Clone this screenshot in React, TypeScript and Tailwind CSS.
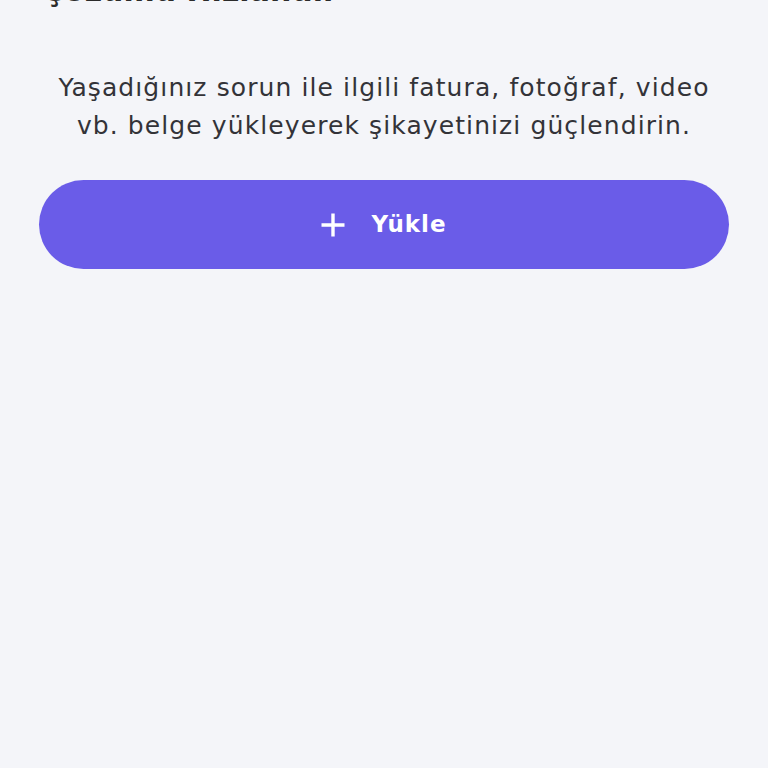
export default function App() {
  return (
    <div className="min-h-[768px] w-full overflow-hidden bg-[#f4f5f9] font-['DejaVu_Sans',sans-serif]">
      <div className="px-[39px]">
        <h2 className="mt-[-27px] pl-[3px] text-[30px] font-bold leading-[36px] text-[#2b2b2b]">
          Çözümü Hızlandır
        </h2>
        <p className="mt-[60px] text-center text-[25px] leading-[38px] tracking-[1.1px] text-[#333338]">
          Yaşadığınız sorun ile ilgili fatura, fotoğraf, video
          <br />
          vb. belge yükleyerek şikayetinizi güçlendirin.
        </p>
        <button className="mt-[35px] flex h-[89px] w-full items-center justify-center gap-[26px] rounded-full bg-[#6a5ce8] text-white">
          <svg width="24" height="24" viewBox="0 0 24 24" fill="none" stroke="currentColor" strokeWidth="3.4" strokeLinecap="butt">
            <path d="M12 0.5v23M0.5 12h23" />
          </svg>
          <span className="text-[23px] font-bold tracking-[1px]">Yükle</span>
        </button>
      </div>
    </div>
  )
}
